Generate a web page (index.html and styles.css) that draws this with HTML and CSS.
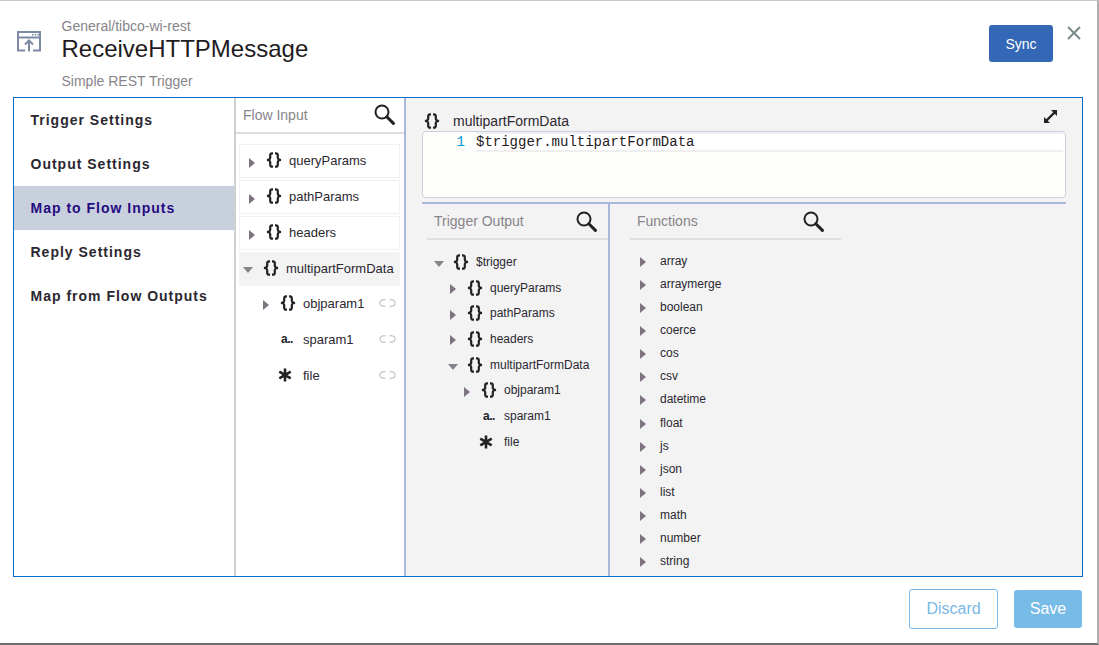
FILE: index.html
```html
<!DOCTYPE html>
<html lang="en">
<head>
<meta charset="utf-8">
<title>ReceiveHTTPMessage</title>
<link rel="stylesheet" href="styles.css">
</head>
<body>
<svg class="defs" aria-hidden="true">
  <symbol id="braces" viewBox="0 0 16 16"><path d="M7 1.3H6.2C4.7 1.3 4.2 2 4.2 3.3V5.8C4.2 7.1 3.4 7.8 1 8C3.4 8.2 4.2 8.9 4.2 10.2V12.7C4.2 14 4.7 14.7 6.2 14.7H7M9 1.3H9.8C11.3 1.3 11.8 2 11.8 3.3V5.8C11.8 7.1 12.6 7.8 15 8C12.6 8.2 11.8 8.9 11.8 10.2V12.7C11.8 14 11.3 14.7 9.8 14.7H9" fill="none" stroke="#222" stroke-width="2.2"/></symbol>
  <symbol id="search" viewBox="0 0 21 21"><circle cx="8" cy="8" r="6.5" fill="none" stroke="#222" stroke-width="2"/><path d="M12.8 12.8L19.4 19.4" stroke="#222" stroke-width="3" stroke-linecap="round"/></symbol>
  <symbol id="right" viewBox="0 0 6 10"><path d="M0 0L6 5L0 10Z" fill="#7d7480"/></symbol>
  <symbol id="down" viewBox="0 0 10 6"><path d="M0 0H10L5 6Z" fill="#86838a"/></symbol>
  <symbol id="star" viewBox="0 0 14 14"><path d="M7 .5V13.5M1.3 3.6L12.7 10.4M12.7 3.6L1.3 10.4" stroke="#222" stroke-width="2.6"/></symbol>
  <symbol id="link" viewBox="0 0 17 8"><path d="M6.5 .8H4A3.2 3.2 0 0 0 4 7.2H6.5M10.5 .8H13A3.2 3.2 0 0 1 13 7.2H10.5" fill="none" stroke="#b4b4b4" stroke-width="1"/></symbol>
</svg>
<div class="modal">
  <header class="head">
    <svg class="trigger-icon" viewBox="0 0 24 21"><path d="M8 19.5H1V1H23V19.5H16M1 6.5H23" fill="none" stroke="#7d8aa5" stroke-width="2"/><path d="M12 20.5V10M8 13.5L12 9.5L16 13.5" fill="none" stroke="#7d8aa5" stroke-width="2"/><path d="M15 3.8H16.5M17.8 3.8H19.3M20.4 3.8H21.9" stroke="#7d8aa5" stroke-width="1.4"/></svg>
    <div class="titles">
      <div class="crumb">General/tibco-wi-rest</div>
      <h1 class="name">ReceiveHTTPMessage</h1>
      <div class="desc">Simple REST Trigger</div>
    </div>
    <button class="sync">Sync</button>
    <svg class="close" viewBox="0 0 14 14"><path d="M1 1L13 13M13 1L1 13" stroke="#7b8a8a" stroke-width="2"/></svg>
  </header>

  <main class="box">
    <nav class="nav">
      <a class="nav-item">Trigger Settings</a>
      <a class="nav-item">Output Settings</a>
      <a class="nav-item active">Map to Flow Inputs</a>
      <a class="nav-item">Reply Settings</a>
      <a class="nav-item">Map from Flow Outputs</a>
    </nav>

    <section class="flow">
      <div class="flow-head">
        <span class="label">Flow Input</span>
        <svg class="search"><use href="#search"/></svg>
      </div>
      <ul class="flow-list">
        <li class="card"><svg class="arrow"><use href="#right"/></svg><svg class="brace"><use href="#braces"/></svg><span>queryParams</span></li>
        <li class="card"><svg class="arrow"><use href="#right"/></svg><svg class="brace"><use href="#braces"/></svg><span>pathParams</span></li>
        <li class="card"><svg class="arrow"><use href="#right"/></svg><svg class="brace"><use href="#braces"/></svg><span>headers</span></li>
        <li class="card open"><svg class="arrow-down"><use href="#down"/></svg><svg class="brace"><use href="#braces"/></svg><span>multipartFormData</span></li>
        <li class="leaf"><svg class="arrow"><use href="#right"/></svg><svg class="brace"><use href="#braces"/></svg><span class="grow">objparam1</span><svg class="link"><use href="#link"/></svg></li>
        <li class="leaf"><b class="str">a..</b><span class="grow">sparam1</span><svg class="link"><use href="#link"/></svg></li>
        <li class="leaf"><svg class="star"><use href="#star"/></svg><span class="grow">file</span><svg class="link"><use href="#link"/></svg></li>
      </ul>
    </section>

    <section class="work">
      <div class="expr-head">
        <svg class="brace"><use href="#braces"/></svg>
        <span class="expr-name">multipartFormData</span>
        <svg class="expand" viewBox="0 0 13 13"><path d="M2.5 10.5L10.5 2.5" stroke="#222" stroke-width="2.4"/><path d="M7 0H13V6ZM0 7V13H6Z" fill="#222"/></svg>
      </div>
      <div class="editor">
        <span class="gutter">1</span>
        <div class="code">$trigger.multipartFormData</div>
      </div>
      <div class="panes">
        <div class="pane-out">
          <div class="pane-head">
            <span class="label">Trigger Output</span>
            <svg class="search"><use href="#search"/></svg>
          </div>
          <ul class="tree">
            <li class="d0"><svg class="arrow-down"><use href="#down"/></svg><svg class="brace"><use href="#braces"/></svg><span>$trigger</span></li>
            <li class="d1"><svg class="arrow"><use href="#right"/></svg><svg class="brace"><use href="#braces"/></svg><span>queryParams</span></li>
            <li class="d1"><svg class="arrow"><use href="#right"/></svg><svg class="brace"><use href="#braces"/></svg><span>pathParams</span></li>
            <li class="d1"><svg class="arrow"><use href="#right"/></svg><svg class="brace"><use href="#braces"/></svg><span>headers</span></li>
            <li class="d1"><svg class="arrow-down"><use href="#down"/></svg><svg class="brace"><use href="#braces"/></svg><span>multipartFormData</span></li>
            <li class="d2"><svg class="arrow"><use href="#right"/></svg><svg class="brace"><use href="#braces"/></svg><span>objparam1</span></li>
            <li class="d3"><b class="str">a..</b><span>sparam1</span></li>
            <li class="d3"><svg class="star"><use href="#star"/></svg><span>file</span></li>
          </ul>
        </div>
        <div class="pane-fn">
          <div class="fn-col">
            <div class="pane-head fn-head">
              <span class="label">Functions</span>
              <svg class="search"><use href="#search"/></svg>
            </div>
            <ul class="fns">
              <li><svg class="arrow"><use href="#right"/></svg>array</li>
              <li><svg class="arrow"><use href="#right"/></svg>arraymerge</li>
              <li><svg class="arrow"><use href="#right"/></svg>boolean</li>
              <li><svg class="arrow"><use href="#right"/></svg>coerce</li>
              <li><svg class="arrow"><use href="#right"/></svg>cos</li>
              <li><svg class="arrow"><use href="#right"/></svg>csv</li>
              <li><svg class="arrow"><use href="#right"/></svg>datetime</li>
              <li><svg class="arrow"><use href="#right"/></svg>float</li>
              <li><svg class="arrow"><use href="#right"/></svg>js</li>
              <li><svg class="arrow"><use href="#right"/></svg>json</li>
              <li><svg class="arrow"><use href="#right"/></svg>list</li>
              <li><svg class="arrow"><use href="#right"/></svg>math</li>
              <li><svg class="arrow"><use href="#right"/></svg>number</li>
              <li><svg class="arrow"><use href="#right"/></svg>string</li>
            </ul>
          </div>
        </div>
      </div>
    </section>
  </main>

  <footer class="foot">
    <button class="discard">Discard</button>
    <button class="save">Save</button>
  </footer>
</div>
</body>
</html>
```

FILE: styles.css
```css
* { box-sizing: border-box; }
html, body { margin: 0; height: 100%; overflow: hidden; background: #fff; }
body { font-family: "Liberation Sans", Arial, sans-serif; color: #2b2730; }
ul { list-style: none; margin: 0; padding: 0; }
.defs { position: absolute; width: 0; height: 0; }

.modal {
  width: 1099px; height: 645px;
  background: #fff;
  border-top: 1px solid #c8c8c8;
  border-right: 2px solid #b0b0b0;
  border-bottom: 2px solid #6f6f6f;
  display: flex; flex-direction: column;
  padding: 0 14px 0 13px;
}

/* header */
.head { height: 96px; flex: none; display: flex; align-items: flex-start; }
.trigger-icon { width: 24px; height: 21px; margin: 30px 20.5px 0 4px; flex: none; }
.titles { flex: 1; padding-top: 17px; }
.crumb { font-size: 14px; line-height: 16px; color: #88848a; }
.name { margin: -1px 0 0; font-size: 24px; line-height: 32px; font-weight: 400; color: #1f1b22; }
.desc { margin-top: 7px; font-size: 14px; line-height: 18px; color: #88848a; }
.sync {
  width: 64px; height: 37px; margin-top: 24px;
  background: #3467b5; color: #fff; border: 0; border-radius: 3px;
  font: 14px "Liberation Sans", Arial, sans-serif;
}
.close { width: 14px; height: 14px; margin: 25px 2px 0 14px; flex: none; }

/* main box */
.box {
  height: 480px; flex: none;
  display: grid; grid-template-columns: 222px 170px 1fr;
  border: 1px solid #0b6fc9;
}
.nav { border-right: 2px solid #cfcfcf; }
.nav-item {
  display: block; height: 44px; line-height: 44px; padding-left: 16.5px;
  font-size: 14px; font-weight: 700; letter-spacing: 1px; color: #2b2730;
}
.nav-item.active { background: #c8d0de; color: #260a80; }

/* flow input */
.flow { border-right: 2px solid #a8b8d8; min-width: 0; }
.flow-head {
  height: 36px; display: flex; align-items: center; justify-content: space-between;
  padding: 0 9px 0 7px; border-bottom: 2px solid #dedede;
}
.label { font-size: 14px; color: #88848a; }
.search { width: 21px; height: 21px; flex: none; }
.flow-head .search { margin-top: -2px; }

.flow-list { padding: 10px 4px 0 3px; font-size: 13px; }
.flow-list li { height: 34px; margin-bottom: 2px; display: flex; align-items: center; }
.card { border: 1px solid #f1f1f1; padding: 0 0 2px 9px; }
.card .brace { margin-left: 11px; margin-right: 7px; }
.card .arrow { margin-top: 5px; }
.card.open { background: #f3f3f3; border-color: #f3f3f3; padding-left: 3px; }
.card.open .arrow-down { margin-top: 4px; }
.card.open .brace { margin-left: 10px; margin-right: 7px; }
.leaf { padding: 0 4px 4px 24px; }
.leaf .brace { margin-left: 11px; margin-right: 7px; }
.leaf .arrow { margin-top: 4px; }
.leaf .str { width: 22px; margin-left: 18px; }
.leaf .star { margin-left: 15px; margin-right: 11px; }
.grow { flex: 1; }

.arrow { width: 6px; height: 10px; flex: none; }
.arrow-down { width: 10px; height: 6px; flex: none; }
.brace { width: 16px; height: 16px; flex: none; }
.star { width: 14px; height: 14px; flex: none; }
.link { width: 17px; height: 8px; flex: none; }
.str { font-size: 12px; font-weight: 700; color: #222; letter-spacing: -.5px; }

/* right side */
.work { background: #f3f3f3; padding: 0 16px; display: flex; flex-direction: column; min-width: 0; }
.expr-head { height: 33px; flex: none; display: flex; align-items: center; padding: 12px 9px 0 2px; font-size: 14px; }
.expr-name { flex: 1; margin-left: 13px; color: #2b2730; }
.expand { width: 13px; height: 13px; margin-top: -8px; }
.editor {
  height: 67px; flex: none; background: #fdfdfb;
  border: 1px solid #c9d0de; border-radius: 4px;
  padding: 0 2px 0 0; display: flex; align-items: flex-start;
  font: 14px/16px "Liberation Mono", monospace;
}
.gutter { width: 53px; padding: 2px 11px 0 0; text-align: right; color: #0098d4; flex: none; }
.code { flex: 1; background: #fff; border-top: 2px solid #efefef; border-bottom: 2px solid #efefef; height: 20px; white-space: pre; color: #1f1b22; }

.panes {
  flex: 1; min-height: 0; margin-top: 4px;
  display: grid; grid-template-columns: 188px 1fr;
  border-top: 2px solid #a8b8d8;
}
.pane-out { border-right: 2px solid #a8b8d8; padding-left: 5px; }
.pane-head {
  height: 36px; display: flex; align-items: center; justify-content: space-between;
  padding: 0 11px 0 7px; border-bottom: 2px solid #dedede;
}
.tree { padding-top: 9px; font-size: 12px; }
.tree li { height: 25.7px; display: flex; align-items: center; }
.tree .brace { margin-right: 7px; }
.tree .arrow { margin-top: 3px; }
.tree .arrow-down { margin-top: 4px; }
.d0 { padding-left: 7px; }
.d0 .arrow-down { margin-right: 9px; }
.d1 { padding-left: 23px; }
.d1 .arrow { margin-right: 11px; }
.d1 .arrow-down { margin-right: 9px; margin-left: -2px; }
.d2 { padding-left: 37px; }
.d2 .arrow { margin-right: 11px; }
.d3 { padding-left: 55px; }
.d3 .str { width: 21px; margin-left: 1px; }
.d3 .star { margin: 0 11px 0 -3px; }

.pane-fn { padding-left: 20px; }
.fn-col { width: 211px; }
.fn-head { padding-right: 17px; }
.fns { padding-top: 9.3px; font-size: 12px; }
.fns li { height: 23.1px; display: flex; align-items: center; padding-left: 10px; }
.fns .arrow { margin-right: 14px; margin-top: 2px; }

/* footer */
.foot { flex: 1; display: flex; justify-content: flex-end; align-items: flex-start; padding: 12px 1px 0 0; }
.discard, .save { font: 16px "Liberation Sans", Arial, sans-serif; border-radius: 3px; }
.discard { width: 89px; height: 40px; background: #fff; color: #7ab9e6; border: 1px solid #7ab9e6; margin-right: 16px; }
.save { width: 68px; height: 38px; margin-top: 1px; background: #77bbe7; color: #fff; border: 0; }
```
